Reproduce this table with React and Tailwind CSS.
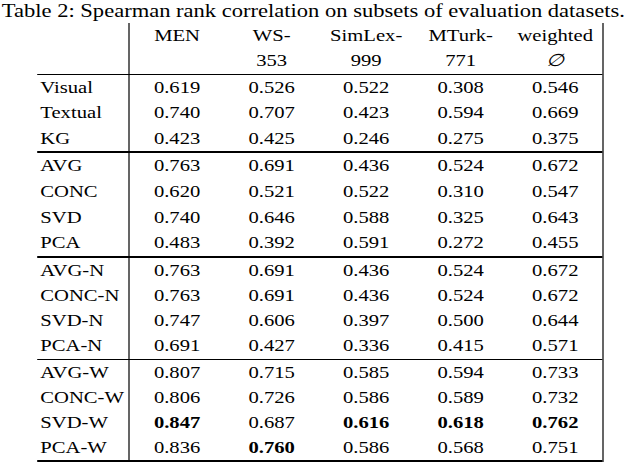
import React from "react";

const groups = [
  {
    rowH: "h-[25.4px]",
    border: "border-b-2",
    rows: [
      ["Visual", ["0.619", "0.526", "0.522", "0.308", "0.546"]],
      ["Textual", ["0.740", "0.707", "0.423", "0.594", "0.669"]],
      ["KG", ["0.423", "0.425", "0.246", "0.275", "0.375"]],
    ],
  },
  {
    rowH: "h-[25.7px]",
    border: "border-b-2",
    rows: [
      ["AVG", ["0.763", "0.691", "0.436", "0.524", "0.672"]],
      ["CONC", ["0.620", "0.521", "0.522", "0.310", "0.547"]],
      ["SVD", ["0.740", "0.646", "0.588", "0.325", "0.643"]],
      ["PCA", ["0.483", "0.392", "0.591", "0.272", "0.455"]],
    ],
  },
  {
    rowH: "h-[25.2px]",
    border: "border-b",
    rows: [
      ["AVG-N", ["0.763", "0.691", "0.436", "0.524", "0.672"]],
      ["CONC-N", ["0.763", "0.691", "0.436", "0.524", "0.672"]],
      ["SVD-N", ["0.747", "0.606", "0.397", "0.500", "0.644"]],
      ["PCA-N", ["0.691", "0.427", "0.336", "0.415", "0.571"]],
    ],
  },
  {
    rowH: "h-[25px]",
    border: "border-b-2",
    rows: [
      ["AVG-W", ["0.807", "0.715", "0.585", "0.594", "0.733"]],
      ["CONC-W", ["0.806", "0.726", "0.586", "0.589", "0.732"]],
      ["SVD-W", ["0.847*", "0.687", "0.616*", "0.618*", "0.762*"]],
      ["PCA-W", ["0.836", "0.760*", "0.586", "0.568", "0.751"]],
    ],
  },
];

const headers = [
  ["MEN", ""],
  ["WS-", "353"],
  ["SimLex-", "999"],
  ["MTurk-", "771"],
  ["weighted", "∅"],
];

function Row({ label, values, rowH }) {
  return (
    <div className={`flex ${rowH} leading-[25px]`}>
      <div className="w-[77.6px] shrink-0 border-r border-black pl-[3px] whitespace-nowrap">
        {label}
      </div>
      {values.map((v, i) => {
        const bold = v.endsWith("*");
        return (
          <div key={i} className={`flex-1 text-center ${bold ? "font-bold" : ""}`}>
            {bold ? v.slice(0, -1) : v}
          </div>
        );
      })}
    </div>
  );
}

export default function App() {
  return (
    <div className="w-[640px] h-[465px] bg-white">
      <div className="w-[532px] origin-top-left scale-x-[1.2] font-['Liberation_Serif',serif] text-black">
        <div className="pl-[1.5px] text-[18.8px] leading-[21px] whitespace-nowrap">
          Table 2: Spearman rank correlation on subsets of evaluation datasets.
        </div>
        <div className="mt-[2px] ml-[30.6px] w-[472.5px] border-r border-black text-[17.2px]">
          <div className="flex h-[52px] border-b border-black leading-[25px]">
            <div className="w-[77.6px] shrink-0 border-r border-black" />
            {headers.map(([a, b], i) => (
              <div key={i} className="flex-1 flex flex-col items-center">
                <span>{a}</span>
                {b && <span className={b === "∅" ? "italic" : ""}>{b}</span>}
              </div>
            ))}
          </div>
          {groups.map((g, gi) => (
            <div key={gi} className={`${g.border} border-black`}>
              {g.rows.map(([label, values]) => (
                <Row key={label} label={label} values={values} rowH={g.rowH} />
              ))}
            </div>
          ))}
        </div>
      </div>
    </div>
  );
}
